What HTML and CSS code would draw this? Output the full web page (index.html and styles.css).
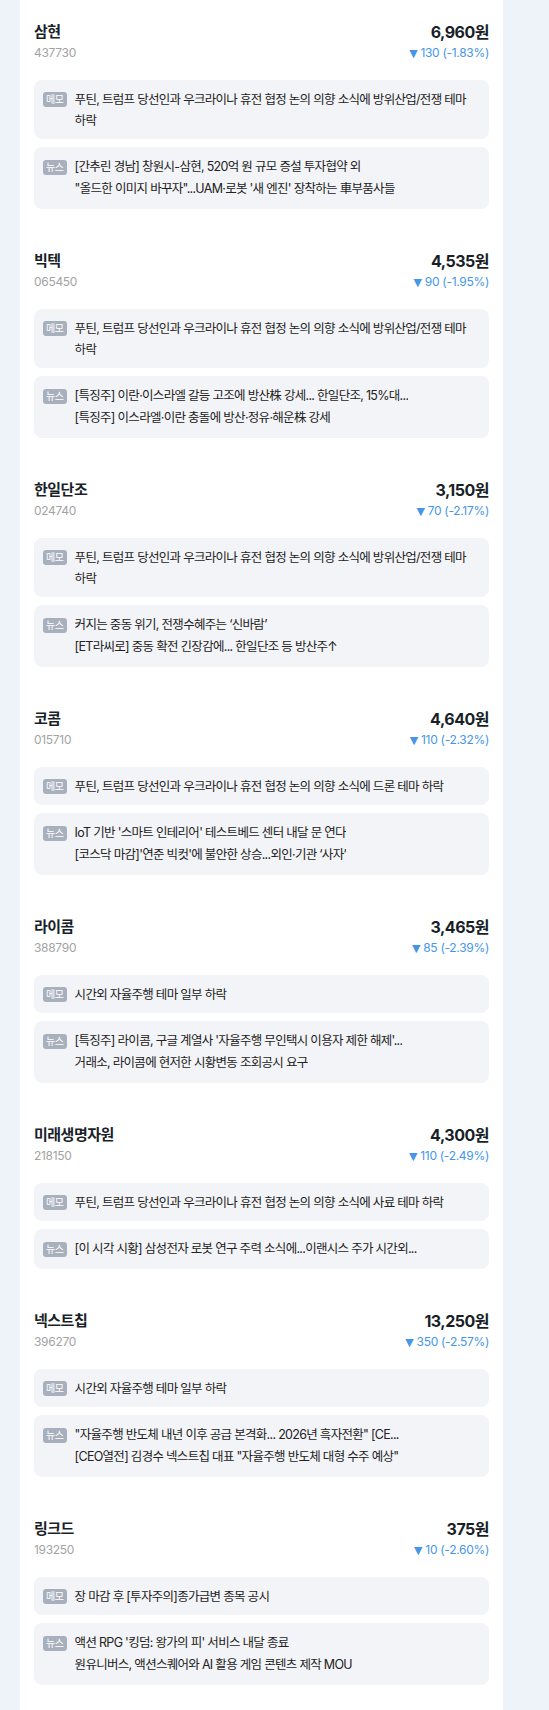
FILE: index.html
```html
<!DOCTYPE html>
<html lang="ko">
<head>
    <meta charset="UTF-8">
    <meta name="viewport" content="width=device-width, initial-scale=1.0">
    <title>관심종목</title>
    <link rel="stylesheet" href="styles.css">
</head>
<body>
<div class="stock-list">

    <div class="stock-item">
        <div class="stock-head">
            <div>
                <div class="stock-name">삼현</div>
                <div class="stock-code">437730</div>
            </div>
            <div class="stock-right">
                <div class="stock-price">6,960원</div>
                <div class="stock-change"><span class="arrow">▼</span> 130 (-1.83%)</div>
            </div>
        </div>
        <div class="memo-box">
            <span class="tag">메모</span>
            <p class="memo-text">푸틴, 트럼프 당선인과 우크라이나 휴전 협정 논의 의향 소식에 방위산업/전쟁 테마 하락</p>
        </div>
        <div class="news-box">
            <span class="tag">뉴스</span>
            <div class="news-lines">
                <div class="news-line">[간추린 경남] 창원시-삼현, 520억 원 규모 증설 투자협약 외</div>
                <div class="news-line">"올드한 이미지 바꾸자"...UAM·로봇 '새 엔진' 장착하는 車부품사들</div>
            </div>
        </div>
    </div>

    <div class="stock-item">
        <div class="stock-head">
            <div>
                <div class="stock-name">빅텍</div>
                <div class="stock-code">065450</div>
            </div>
            <div class="stock-right">
                <div class="stock-price">4,535원</div>
                <div class="stock-change"><span class="arrow">▼</span> 90 (-1.95%)</div>
            </div>
        </div>
        <div class="memo-box">
            <span class="tag">메모</span>
            <p class="memo-text">푸틴, 트럼프 당선인과 우크라이나 휴전 협정 논의 의향 소식에 방위산업/전쟁 테마 하락</p>
        </div>
        <div class="news-box">
            <span class="tag">뉴스</span>
            <div class="news-lines">
                <div class="news-line">[특징주] 이란·이스라엘 갈등 고조에 방산株 강세... 한일단조, 15%대...</div>
                <div class="news-line">[특징주] 이스라엘·이란 충돌에 방산·정유·해운株 강세</div>
            </div>
        </div>
    </div>

    <div class="stock-item">
        <div class="stock-head">
            <div>
                <div class="stock-name">한일단조</div>
                <div class="stock-code">024740</div>
            </div>
            <div class="stock-right">
                <div class="stock-price">3,150원</div>
                <div class="stock-change"><span class="arrow">▼</span> 70 (-2.17%)</div>
            </div>
        </div>
        <div class="memo-box">
            <span class="tag">메모</span>
            <p class="memo-text">푸틴, 트럼프 당선인과 우크라이나 휴전 협정 논의 의향 소식에 방위산업/전쟁 테마 하락</p>
        </div>
        <div class="news-box">
            <span class="tag">뉴스</span>
            <div class="news-lines">
                <div class="news-line">커지는 중동 위기, 전쟁수혜주는 ‘신바람’</div>
                <div class="news-line">[ET라씨로] 중동 확전 긴장감에... 한일단조 등 방산주↑</div>
            </div>
        </div>
    </div>

    <div class="stock-item">
        <div class="stock-head">
            <div>
                <div class="stock-name">코콤</div>
                <div class="stock-code">015710</div>
            </div>
            <div class="stock-right">
                <div class="stock-price">4,640원</div>
                <div class="stock-change"><span class="arrow">▼</span> 110 (-2.32%)</div>
            </div>
        </div>
        <div class="memo-box">
            <span class="tag">메모</span>
            <p class="memo-text">푸틴, 트럼프 당선인과 우크라이나 휴전 협정 논의 의향 소식에 드론 테마 하락</p>
        </div>
        <div class="news-box">
            <span class="tag">뉴스</span>
            <div class="news-lines">
                <div class="news-line">IoT 기반 '스마트 인테리어' 테스트베드 센터 내달 문 연다</div>
                <div class="news-line">[코스닥 마감]'연준 빅컷'에 불안한 상승...외인·기관 ‘사자’</div>
            </div>
        </div>
    </div>

    <div class="stock-item">
        <div class="stock-head">
            <div>
                <div class="stock-name">라이콤</div>
                <div class="stock-code">388790</div>
            </div>
            <div class="stock-right">
                <div class="stock-price">3,465원</div>
                <div class="stock-change"><span class="arrow">▼</span> 85 (-2.39%)</div>
            </div>
        </div>
        <div class="memo-box">
            <span class="tag">메모</span>
            <p class="memo-text">시간외 자율주행 테마 일부 하락</p>
        </div>
        <div class="news-box">
            <span class="tag">뉴스</span>
            <div class="news-lines">
                <div class="news-line">[특징주] 라이콤, 구글 계열사 '자율주행 무인택시 이용자 제한 해제'...</div>
                <div class="news-line">거래소, 라이콤에 현저한 시황변동 조회공시 요구</div>
            </div>
        </div>
    </div>

    <div class="stock-item">
        <div class="stock-head">
            <div>
                <div class="stock-name">미래생명자원</div>
                <div class="stock-code">218150</div>
            </div>
            <div class="stock-right">
                <div class="stock-price">4,300원</div>
                <div class="stock-change"><span class="arrow">▼</span> 110 (-2.49%)</div>
            </div>
        </div>
        <div class="memo-box">
            <span class="tag">메모</span>
            <p class="memo-text">푸틴, 트럼프 당선인과 우크라이나 휴전 협정 논의 의향 소식에 사료 테마 하락</p>
        </div>
        <div class="news-box">
            <span class="tag">뉴스</span>
            <div class="news-lines">
                <div class="news-line">[이 시각 시황] 삼성전자 로봇 연구 주력 소식에...이랜시스 주가 시간외...</div>
            </div>
        </div>
    </div>

    <div class="stock-item">
        <div class="stock-head">
            <div>
                <div class="stock-name">넥스트칩</div>
                <div class="stock-code">396270</div>
            </div>
            <div class="stock-right">
                <div class="stock-price">13,250원</div>
                <div class="stock-change"><span class="arrow">▼</span> 350 (-2.57%)</div>
            </div>
        </div>
        <div class="memo-box">
            <span class="tag">메모</span>
            <p class="memo-text">시간외 자율주행 테마 일부 하락</p>
        </div>
        <div class="news-box">
            <span class="tag">뉴스</span>
            <div class="news-lines">
                <div class="news-line">"자율주행 반도체 내년 이후 공급 본격화... 2026년 흑자전환" [CE...</div>
                <div class="news-line">[CEO열전] 김경수 넥스트칩 대표 "자율주행 반도체 대형 수주 예상"</div>
            </div>
        </div>
    </div>

    <div class="stock-item">
        <div class="stock-head">
            <div>
                <div class="stock-name">링크드</div>
                <div class="stock-code">193250</div>
            </div>
            <div class="stock-right">
                <div class="stock-price">375원</div>
                <div class="stock-change"><span class="arrow">▼</span> 10 (-2.60%)</div>
            </div>
        </div>
        <div class="memo-box">
            <span class="tag">메모</span>
            <p class="memo-text">장 마감 후 [투자주의]종가급변 종목 공시</p>
        </div>
        <div class="news-box">
            <span class="tag">뉴스</span>
            <div class="news-lines">
                <div class="news-line">액션 RPG '킹덤: 왕가의 피' 서비스 내달 종료</div>
                <div class="news-line">원유니버스, 액션스퀘어와 AI 활용 게임 콘텐츠 제작 MOU</div>
            </div>
        </div>
    </div>

</div>
</body>
</html>
```

FILE: styles.css
```css
body {
  margin: 0;
  background-color: #eef2f9;
  font-family: "Inter", "Noto Sans CJK KR", sans-serif;
  color: #191f28;
}

.stock-list {
  width: 483px;
  margin-left: 20px;
  min-height: 1710px;
  background-color: #ffffff;
}

.stock-item {
  padding: 20px 14px;
}

.stock-head {
  display: flex;
  justify-content: space-between;
  margin-bottom: 17px;
}
.stock-right {
  text-align: right;
}
.stock-name {
  font-size: 15px;
  font-weight: bold;
  line-height: 24px;
  letter-spacing: -0.5px;
}
.stock-code {
  font-size: 12px;
  line-height: 18px;
  color: #a3a3a3;
  letter-spacing: -0.3px;
}
.stock-price {
  font-size: 16px;
  font-weight: bold;
  line-height: 24px;
  letter-spacing: -0.5px;
}
.stock-change {
  font-size: 12px;
  line-height: 18px;
  color: #4596e8;
  letter-spacing: -0.3px;
}
.arrow {
  font-family: "DejaVu Sans", sans-serif;
  font-size: 11px;
}

.memo-box,.news-box {
  display: flex;
  align-items: flex-start;
  gap: 8px;
  background-color: #f3f4f7;
  border-radius: 8px;
  font-size: 12.5px;
  color: #222222;
  letter-spacing: -0.7px;
}
.memo-box {
  padding: 9px 6px 8px 9px;
  margin-bottom: 8px;
}
.news-box {
  padding: 9px 6px 9px 9px;
}

.tag {
  flex-shrink: 0;
  margin-top: 3px;
  padding: 0 3px;
  height: 15px;
  line-height: 15px;
  border-radius: 3px;
  background-color: #a9b0bd;
  color: #ffffff;
  font-size: 10px;
  letter-spacing: -0.4px;
}
.news-box .tag {
  margin-top: 4px;
}

.memo-text {
  margin: 0;
  line-height: 21px;
  word-break: keep-all;
}
.news-lines {
  min-width: 0;
}
.news-line {
  line-height: 22px;
  white-space: nowrap;
  overflow: hidden;
}
```
